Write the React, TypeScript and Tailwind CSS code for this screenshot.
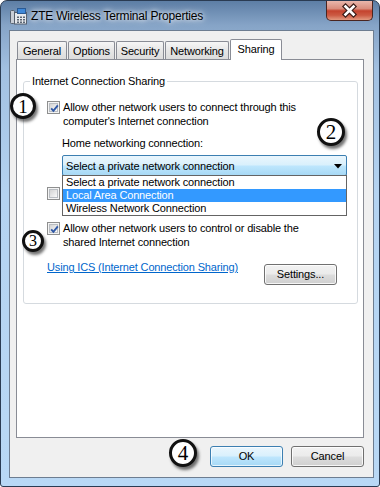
import React from "react";

const TABS = [
  { label: "General", w: "w-[50px]" },
  { label: "Options", w: "w-[47px]" },
  { label: "Security", w: "w-[48px]" },
  { label: "Networking", w: "w-[64px]" },
];

const LIST_ITEMS = [
  "Select a private network connection",
  "Local Area Connection",
  "Wireless Network Connection",
];

function TitleIcon() {
  return (
    <svg width="17" height="17" viewBox="0 0 17 17" className="mt-[7px] shrink-0">
      <rect x="0.5" y="2.5" width="4" height="13" rx="1" fill="#c9ced6" stroke="#56606e" />
      <rect x="4.5" y="4.5" width="12" height="11.5" fill="#e6e9ed" stroke="#56606e" />
      <rect x="7.5" y="0.5" width="8" height="5" fill="#3f88d8" stroke="#2a5a94" />
      {[8.5, 11, 13.5].map((y) =>
        [7, 10, 13].map((x) => (
          <rect key={`${x}-${y}`} x={x} y={y} width="2" height="1.5" fill="#5a6573" />
        ))
      )}
    </svg>
  );
}

function CloseButton() {
  return (
    <div className="relative ml-auto h-[20px] w-[47px] shrink-0 overflow-hidden rounded-b-[5px] border border-t-0 border-[#4a2520] bg-[linear-gradient(180deg,#e9b7ac_0%,#d98d7d_40%,#c4432e_52%,#cc5a43_75%,#e29a80_100%)]">
      <svg width="47" height="20" viewBox="0 0 47 20" className="absolute left-[-1px] top-0">
        <path d="M19.5 5.5 L27.5 13.5 M27.5 5.5 L19.5 13.5" stroke="#3b1d18" strokeWidth="5" strokeLinecap="square" />
        <path d="M19.5 5.5 L27.5 13.5 M27.5 5.5 L19.5 13.5" stroke="#ffffff" strokeWidth="2.6" strokeLinecap="square" />
      </svg>
    </div>
  );
}

function CheckBox({ checked }: { checked?: boolean }) {
  return (
    <div className="mt-[1px] h-[13px] w-[13px] shrink-0 border border-[#8e8f8f] bg-[#f4f4f4] p-[1px]">
      <div className="relative h-full w-full border border-[#b9bdc2] bg-[linear-gradient(135deg,#d3d3d3,#f9f9f9)]">
        {checked && (
          <svg width="11" height="11" viewBox="0 0 11 11" className="absolute left-[-1px] top-[-1px]">
            <path d="M2.2 5.4 L4.4 7.8 L8.8 2.4" fill="none" stroke="#2f58a6" strokeWidth="1.9" />
          </svg>
        )}
      </div>
    </div>
  );
}

function Marker({ n, cls }: { n: string; cls: string }) {
  return (
    <div
      className={`absolute flex items-center justify-center rounded-full border-[3px] border-[#111] bg-white shadow-[2px_3px_3px_rgba(0,0,0,0.55)] font-['Liberation_Serif','Times_New_Roman',serif] leading-none text-black ${cls}`}
    >
      {n}
    </div>
  );
}

export default function App() {
  return (
    <div className="relative flex h-[487px] w-[380px] flex-col overflow-hidden rounded-t-[7px] rounded-b-[3px] border border-[#2a3b52] bg-[linear-gradient(180deg,#5d7ea5_0%,#86a4c7_5%,#a2c0e1_14%,#b4d3f1_40%,#b9d8f5_100%)] font-['Liberation_Sans',Arial,sans-serif] text-[11px] tracking-[-0.15px] text-black">
      {/* Title bar */}
      <div className="flex h-[29px] shrink-0 items-start pl-[9px] pr-[6px]">
        <TitleIcon />
        <span className="ml-[4px] mt-[8px] text-[12px] leading-[14px] tracking-[-0.2px] [text-shadow:0_0_8px_#ffffff,0_0_4px_#ffffff]">
          ZTE Wireless Terminal Properties
        </span>
        <CloseButton />
      </div>

      {/* Client area */}
      <div className="ml-[8px] mr-[5px] h-[448px] border border-[#6d7d91] bg-[#f0f0f0]">
        <div className="ml-[6px] w-[348px] pt-[8px]">
          {/* Tabs */}
          <div className="flex h-[20px] items-end gap-[1px] pl-[1px]">
            {TABS.map((t) => (
              <div
                key={t.label}
                className={`flex h-[18px] items-center justify-center rounded-t-[2px] border border-b-0 border-[#898c95] bg-[linear-gradient(180deg,#f6f6f6,#e6e6e6_50%,#dcdcdc)] pt-[1px] ${t.w}`}
              >
                {t.label}
              </div>
            ))}
            <div className="relative z-10 -mb-[1px] flex h-[21px] w-[52px] items-center justify-center rounded-t-[2px] border border-b-0 border-[#898c95] bg-white pb-[1px]">
              Sharing
            </div>
          </div>

          {/* Tab panel */}
          <div className="h-[379px] border border-[#898c95] bg-white">
            <fieldset className="ml-[6px] mt-[14px] w-[335px] min-w-0 rounded-[3px] border border-[#d5dadf] p-0">
              <legend className="ml-[6px] px-[2px] leading-[14px]">Internet Connection Sharing</legend>
              <div className="pl-[23px] pr-[10px] pb-[18px] pt-[12px]">
                <div className="flex gap-[3px]">
                  <CheckBox checked />
                  <span className="w-[250px] leading-[14px]">
                    Allow other network users to connect through this computer's Internet connection
                  </span>
                </div>

                <div className="mt-[8px] pl-[15px] leading-[14px]">Home networking connection:</div>

                <div className="relative ml-[15px] mt-[5px] h-[21px] w-[285px] rounded-[2px] border border-[#3c7fb1] bg-[linear-gradient(180deg,#eaf6fd_0%,#d9f0fc_48%,#bee6fd_52%,#a7d9f5_100%)]">
                  <div className="flex h-full items-center pl-[3px] leading-[14px]">
                    Select a private network connection
                  </div>
                  <svg width="8" height="5" viewBox="0 0 8 5" className="absolute right-[4px] top-[8px]">
                    <path d="M0 0 H8 L4 4.5 Z" fill="#000" />
                  </svg>
                  <div className="absolute left-[-1px] top-full z-10 w-[285px] border border-[#646464] bg-white">
                    {LIST_ITEMS.map((it, i) => (
                      <div
                        key={it}
                        className={`h-[13px] pl-[3px] leading-[13px] ${i === 1 ? "bg-[#3399ff] text-white" : ""}`}
                      >
                        {it}
                      </div>
                    ))}
                  </div>
                </div>

                <div className="mt-[10px] flex h-[28px] gap-[3px]">
                  <CheckBox />
                </div>

                <div className="mt-[7px] flex gap-[3px]">
                  <CheckBox checked />
                  <span className="w-[250px] leading-[14px]">
                    Allow other network users to control or disable the shared Internet connection
                  </span>
                </div>

                <div className="mt-[11px] flex items-start justify-between">
                  <span className="leading-[14px] text-[#0066cc] underline">
                    Using ICS (Internet Connection Sharing)
                  </span>
                  <div className="mr-[10px] mt-[4px] flex h-[21px] w-[73px] items-center justify-center rounded-[3px] border border-[#707070] bg-[linear-gradient(180deg,#f2f2f2_0%,#ebebeb_48%,#dddddd_52%,#cfcfcf_100%)] shadow-[inset_0_0_0_1px_rgba(255,255,255,0.8)]">
                    Settings...
                  </div>
                </div>
              </div>
            </fieldset>
          </div>

          {/* Dialog buttons */}
          <div className="mt-[8px] flex justify-end gap-[8px]">
            <div className="flex h-[21px] w-[73px] items-center justify-center rounded-[3px] border border-[#3c7fb1] bg-[linear-gradient(180deg,#eaf6fd_0%,#d9f0fc_48%,#bee6fd_52%,#a7d9f5_100%)] shadow-[inset_0_0_0_1px_rgba(255,255,255,0.7)]">
              OK
            </div>
            <div className="flex h-[21px] w-[73px] items-center justify-center rounded-[3px] border border-[#707070] bg-[linear-gradient(180deg,#f2f2f2_0%,#ebebeb_48%,#dddddd_52%,#cfcfcf_100%)] shadow-[inset_0_0_0_1px_rgba(255,255,255,0.8)]">
              Cancel
            </div>
          </div>
        </div>
      </div>

      {/* Annotation markers */}
      <Marker n="1" cls="left-[9px] top-[92px] h-[26px] w-[26px] text-[19px]" />
      <Marker n="2" cls="left-[316px] top-[117px] h-[28px] w-[28px] text-[21px]" />
      <Marker n="3" cls="left-[21px] top-[229px] h-[22px] w-[22px] text-[16px]" />
      <Marker n="4" cls="left-[168px] top-[438px] h-[28px] w-[28px] text-[21px]" />
    </div>
  );
}
